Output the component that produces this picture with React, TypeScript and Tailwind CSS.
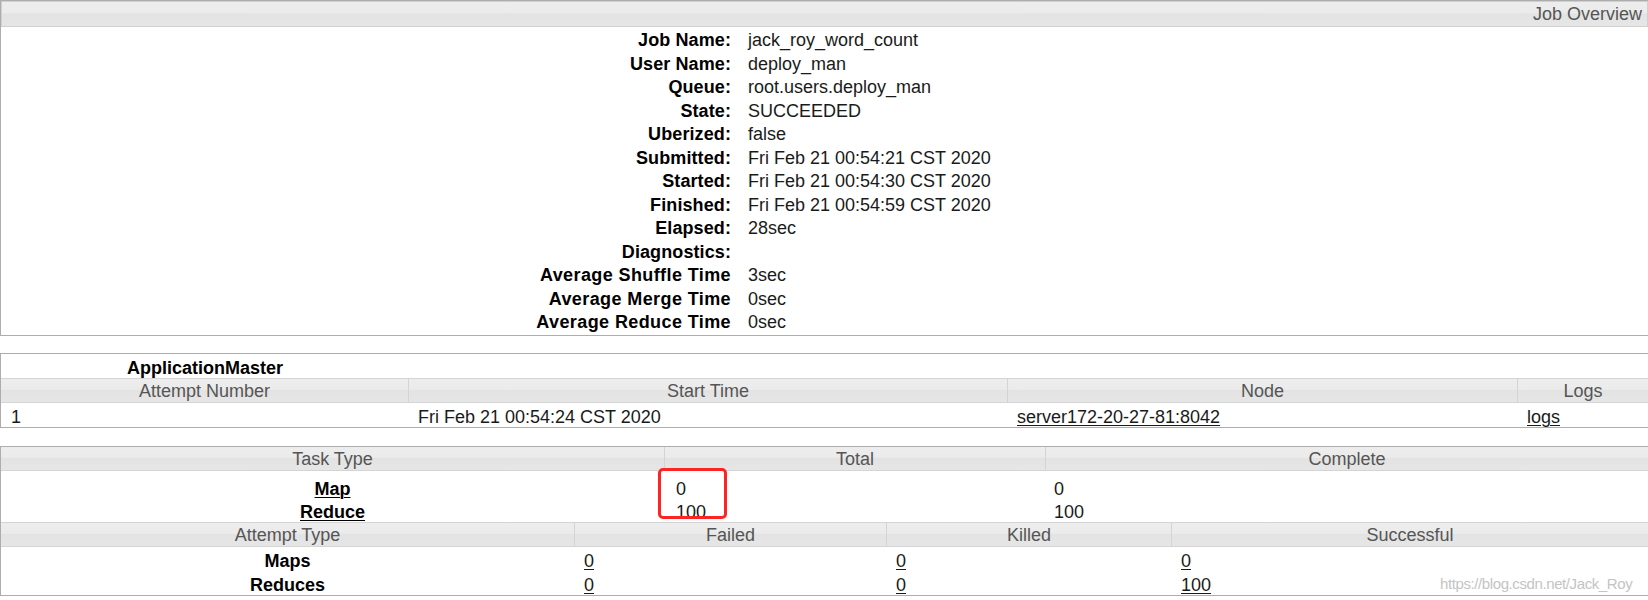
import React from "react";

const hdr =
  "bg-[linear-gradient(#ededed_0%,#ebebeb_45%,#e3e3e3_50%,#e6e6e6_100%)] text-[#555]";

const overview: [string, string][] = [
  ["Job Name:", "jack_roy_word_count"],
  ["User Name:", "deploy_man"],
  ["Queue:", "root.users.deploy_man"],
  ["State:", "SUCCEEDED"],
  ["Uberized:", "false"],
  ["Submitted:", "Fri Feb 21 00:54:21 CST 2020"],
  ["Started:", "Fri Feb 21 00:54:30 CST 2020"],
  ["Finished:", "Fri Feb 21 00:54:59 CST 2020"],
  ["Elapsed:", "28sec"],
  ["Diagnostics:", ""],
  ["Average Shuffle Time", "3sec"],
  ["Average Merge Time", "0sec"],
  ["Average Reduce Time", "0sec"],
];

function Link({ children }: { children: React.ReactNode }) {
  return <span className="underline underline-offset-2 decoration-1">{children}</span>;
}

export default function App() {
  return (
    <div className="w-[1648px] h-[600px] bg-white font-['Liberation_Sans',Arial,sans-serif] text-[18px] text-[#1a1a1a] overflow-hidden">
      {/* Job Overview box */}
      <div className="border border-[#adadad] border-r-0">
        <div className={`${hdr} h-[26px] border border-[#d0d0d0] flex items-center justify-end pr-[5px] leading-none`}>
          Job Overview
        </div>
        <div className="pt-[2px] grid grid-cols-[730px_1fr]">
          {overview.map(([k, v]) => (
            <React.Fragment key={k}>
              <div
                className={`h-[23.5px] leading-[23.5px] text-right font-bold text-black whitespace-nowrap ${
                  k.startsWith("Average") ? "tracking-[0.4px]" : "tracking-[0.1px]"
                }`}
              >
                {k}
              </div>
              <div className="h-[23.5px] leading-[23.5px] pl-[17px] whitespace-nowrap">{v}</div>
            </React.Fragment>
          ))}
        </div>
      </div>

      {/* ApplicationMaster box */}
      <div className="mt-[17px] border border-[#adadad] border-r-0">
        <div className="h-[24px] pt-[2px] leading-[24px] w-[408px] text-center font-bold text-black">ApplicationMaster</div>
        <div className={`${hdr} h-[25px] flex border-y border-[#d4d4d4] leading-[24px]`}>
          <div className="w-[407px] text-center">Attempt Number</div>
          <div className="w-[599px] text-center border-l border-[#d4d4d4]">Start Time</div>
          <div className="w-[510px] text-center border-l border-[#d4d4d4]">Node</div>
          <div className="flex-1 text-center border-l border-[#d4d4d4]">Logs</div>
        </div>
        <div className="h-[24px] pt-[2px] leading-[24px] flex">
          <div className="w-[407px] pl-[10px]">1</div>
          <div className="w-[599px] pl-[10px]">Fri Feb 21 00:54:24 CST 2020</div>
          <div className="w-[510px] pl-[10px]">
            <Link>server172-20-27-81:8042</Link>
          </div>
          <div className="flex-1 pl-[10px]">
            <Link>logs</Link>
          </div>
        </div>
      </div>

      {/* Tasks box */}
      <div className="relative mt-[18px] border border-[#adadad] border-r-0">
        <div className={`${hdr} h-[24px] flex border-b border-[#d4d4d4] leading-[24px]`}>
          <div className="w-[663px] text-center">Task Type</div>
          <div className="w-[381px] text-center border-l border-[#d4d4d4]">Total</div>
          <div className="flex-1 text-center border-l border-[#d4d4d4]">Complete</div>
        </div>
        <div className="pt-[5px]">
          {[
            ["Map", "0", "0"],
            ["Reduce", "100", "100"],
          ].map(([a, b, c]) => (
            <div key={a} className="h-[23px] pt-[2px] leading-[23px] flex">
              <div className="w-[663px] text-center font-bold text-black">
                <Link>{a}</Link>
              </div>
              <div className="w-[381px] pl-[12px]">{b}</div>
              <div className="flex-1 pl-[9px]">{c}</div>
            </div>
          ))}
        </div>
        <div className={`${hdr} h-[25px] flex border-y border-[#d4d4d4] leading-[24px]`}>
          <div className="w-[573px] text-center">Attempt Type</div>
          <div className="w-[312px] text-center border-l border-[#d4d4d4]">Failed</div>
          <div className="w-[285px] text-center border-l border-[#d4d4d4]">Killed</div>
          <div className="flex-1 text-center border-l border-[#d4d4d4]">Successful</div>
        </div>
        <div>
          {[
            ["Maps", "0", "0", "0"],
            ["Reduces", "0", "0", "100"],
          ].map(([a, b, c, d]) => (
            <div key={a} className="h-[24px] pt-[2px] leading-[24px] flex">
              <div className="w-[573px] text-center font-bold text-black">{a}</div>
              <div className="w-[312px] pl-[10px]">
                <Link>{b}</Link>
              </div>
              <div className="w-[285px] pl-[10px]">
                <Link>{c}</Link>
              </div>
              <div className="flex-1 pl-[10px]">
                <Link>{d}</Link>
              </div>
            </div>
          ))}
        </div>

        {/* red highlight box */}
        <div className="absolute left-[657px] top-[21px] w-[69px] h-[51px] border-[3px] border-[#ff2424] rounded-[5px]" />

        {/* watermark */}
        <div className="absolute left-[1439px] bottom-[2px] text-[15px] leading-[18px] text-[#c4c4c4] tracking-[-0.4px] whitespace-nowrap">
          https://blog.csdn.net/Jack_Roy
        </div>
      </div>
    </div>
  );
}
